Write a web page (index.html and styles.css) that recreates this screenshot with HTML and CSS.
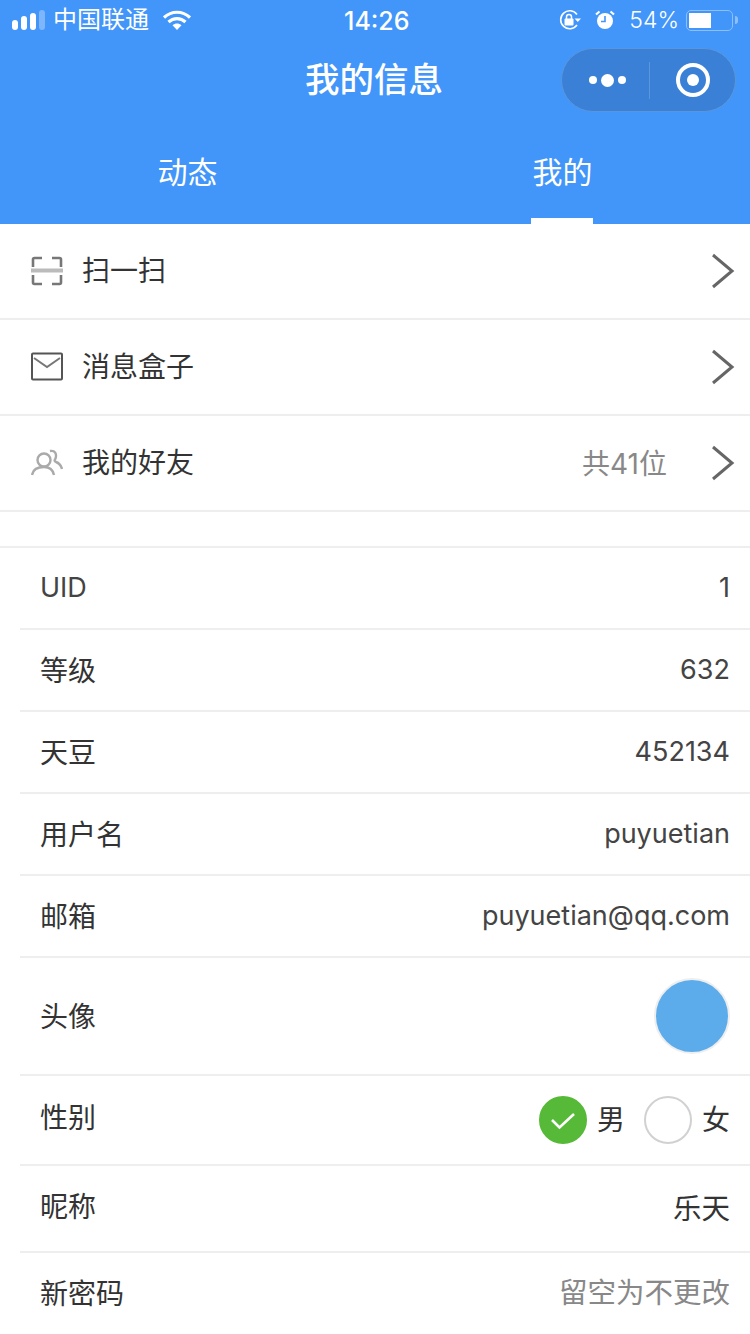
FILE: index.html
```html
<!DOCTYPE html>
<html lang="zh-CN">
<head>
  <meta charset="UTF-8">
  <meta name="viewport" content="width=device-width, initial-scale=1.0">
  <title>我的信息</title>
  <link rel="stylesheet" href="styles.css">
</head>
<body>
  <header class="header">
    <div class="status">
      <div class="status-left">
        <span class="signal"><i></i><i></i><i></i><i class="off"></i></span>
        <span class="carrier">中国联通</span>
        <svg class="wifi" width="28" height="20" viewBox="0 0 28 20">
          <path d="M1 7.5C8.5 .5 19.5 .5 27 7.5" fill="none" stroke="#fff" stroke-width="3.2"/>
          <path d="M5.5 12C10.5 7.5 17.5 7.5 22.5 12" fill="none" stroke="#fff" stroke-width="3.2"/>
          <path d="M9.5 15.2C12.3 13 15.700 13 18.500 15.200L14 20Z" fill="#fff"/>
        </svg>
      </div>
      <div class="time">14:26</div>
      <div class="status-right">
        <svg width="24" height="22" viewBox="0 0 24 22">
          <path d="M19 5.5A9 9 0 1 0 19 16" fill="none" stroke="#fff" stroke-width="1.6"/>
          <path d="M16.5 9.5h6.5l-3.2 3.6z" fill="#fff"/>
          <rect x="6.5" y="9.5" width="9" height="7" rx="1" fill="#fff"/>
          <path d="M8.5 10V8a2.5 2.5 0 0 1 5 0v2" fill="none" stroke="#fff" stroke-width="1.5"/>
        </svg>
        <svg class="alarm" width="20" height="20" viewBox="0 0 20 20">
          <circle cx="10" cy="11" r="8" fill="#fff"/>
          <path d="M10 6v5.5H6" fill="none" stroke="#4295f9" stroke-width="1.6"/>
          <path d="M1 4.5 4.5 1.5M19 4.500 15.500 1.500" stroke="#fff" stroke-width="2.200"/>
        </svg>
        <span class="percent">54%</span>
        <span class="battery"><span class="battery-level"></span></span>
        <span class="battery-tip"></span>
      </div>
    </div>
    <div class="nav">
      <h1 class="title">我的信息</h1>
      <div class="capsule">
        <span class="capsule-dots"><i></i><i class="big"></i><i></i></span>
        <span class="capsule-line"></span>
        <span class="capsule-target"><i></i></span>
      </div>
    </div>
    <div class="tabs">
      <div class="tab">动态</div>
      <div class="tab active">我的</div>
    </div>
  </header>

  <section class="menu">
    <div class="menu-row">
      <svg class="menu-icon" width="32" height="30" viewBox="0 0 32 30">
        <path d="M2 11V3.500Q2 2 3.500 2H11M21 2h7.500Q30 2 30 3.500V11M2 19v7.500Q2 28 3.500 28H11M21 28h7.500Q30 28 30 26.500V19" fill="none" stroke="#777" stroke-width="2.600"/>
        <path d="M0 14.500H32" stroke="#bbb" stroke-width="4"/>
      </svg>
      <span class="menu-label">扫一扫</span>
      <svg class="chevron" width="24" height="36" viewBox="0 0 24 36"><path d="M2 2 21 18 2 34" fill="none" stroke="#666" stroke-width="3"/></svg>
    </div>
    <div class="menu-row">
      <svg class="menu-icon" width="32" height="30" viewBox="0 0 32 30">
        <rect x="1" y="1.500" width="30" height="26" rx="1" fill="none" stroke="#555" stroke-width="2"/>
        <path d="M3 6 16 15 29 6" fill="none" stroke="#777" stroke-width="2"/>
      </svg>
      <span class="menu-label">消息盒子</span>
      <svg class="chevron" width="24" height="36" viewBox="0 0 24 36"><path d="M2 2 21 18 2 34" fill="none" stroke="#666" stroke-width="3"/></svg>
    </div>
    <div class="menu-row">
      <svg class="menu-icon" width="32" height="30" viewBox="0 0 32 30">
        <circle cx="13" cy="12" r="6.500" fill="none" stroke="#aaa" stroke-width="2.400"/>
        <path d="M1 27C2 21 7 19 13 19S22 22 23 27" fill="none" stroke="#aaa" stroke-width="2.400"/>
        <path d="M19 3C24 2 26 6 24.500 10.500 23.500 12 23 13 25 14 28 15 30 17 31 21" fill="none" stroke="#aaa" stroke-width="2.400"/>
      </svg>
      <span class="menu-label">我的好友</span>
      <span class="menu-extra">共41位</span>
      <svg class="chevron" width="24" height="36" viewBox="0 0 24 36"><path d="M2 2 21 18 2 34" fill="none" stroke="#666" stroke-width="3"/></svg>
    </div>
  </section>

  <section class="form">
    <div class="form-row"><span class="latin">UID</span><span class="latin">1</span></div>
    <div class="form-row"><span>等级</span><span class="latin">632</span></div>
    <div class="form-row"><span>天豆</span><span class="latin">452134</span></div>
    <div class="form-row"><span>用户名</span><span class="latin">puyuetian</span></div>
    <div class="form-row"><span>邮箱</span><span class="latin">puyuetian@qq.com</span></div>
    <div class="form-row avatar-row"><span>头像</span><span class="avatar"></span></div>
    <div class="form-row gender-row">
      <span class="raised">性别</span>
      <span class="radios">
        <span class="radio checked">
          <svg width="26" height="20" viewBox="0 0 26 20"><path d="M2 10 9.500 17.500 24 4" fill="none" stroke="#fff" stroke-width="2.600"/></svg>
        </span>
        <span class="radio-label">男</span>
        <span class="radio"></span>
        <span class="radio-label">女</span>
      </span>
    </div>
    <div class="form-row nick-row"><span class="raised">昵称</span><span class="wide">乐天</span></div>
    <div class="form-row last"><span>新密码</span><span class="placeholder wide">留空为不更改</span></div>
  </section>
</body>
</html>
```

FILE: styles.css
```css
html, body {
  margin: 0;
  padding: 0;
}
body {
  width: 750px;
  height: 1334px;
  overflow: hidden;
  background: #fff;
  color: #333;
  font-family: Inter, "Noto Sans CJK SC", sans-serif;
  font-size: 28px;
}
.header {
  height: 224px;
  background: #4295f9;
  color: #fff;
}
.status {
  height: 40px;
  display: flex;
  align-items: center;
  justify-content: space-between;
  padding: 0 12px;
  position: relative;
}
.status-left, .status-right {
  display: flex;
  align-items: center;
}
.signal {
  display: flex;
  align-items: flex-end;
  gap: 3px;
  height: 20px;
}
.signal i {
  width: 6px;
  border-radius: 3px;
  background: #fff;
}
.signal i:nth-child(1) { height: 10px; }
.signal i:nth-child(2) { height: 14px; }
.signal i:nth-child(3) { height: 17px; }
.signal i:nth-child(4) { height: 20px; }
.signal i.off {
  background: #7db6fb;
}
.carrier {
  margin-left: 8px;
  font-size: 24px;
  line-height: 40px;
}
.wifi {
  margin-left: 14px;
}
.time {
  position: absolute;
  left: 344px;
  top: 0;
  font-size: 25px;
  line-height: 42px;
  font-weight: 500;
}
.alarm {
  margin-left: 13px;
}
.percent {
  margin-left: 14px;
  font-size: 23px;
  line-height: 42px;
  font-weight: 300;
}
.battery {
  margin-left: 7px;
  border: 1.5px solid #8dc0fb;
  border-radius: 5px;
  padding: 2px;
  height: 15px;
  width: 41px;
}
.battery-level {
  display: block;
  width: 22px;
  height: 15px;
  background: #fff;
}
.battery-tip {
  margin-left: 2px;
  width: 3px;
  height: 8px;
  background: #8dc0fb;
  border-radius: 0 3px 3px 0;
}
.nav {
  height: 80px;
  position: relative;
  display: flex;
  align-items: center;
  justify-content: center;
}
.title {
  margin: 0 2px 0 0;
  font-size: 34.5px;
  font-weight: 500;
  line-height: 78px;
}
.capsule {
  position: absolute;
  right: 14px;
  top: 8px;
  width: 173px;
  height: 62px;
  border: 1px solid #5a96dc;
  border-radius: 32px;
  background: #3a80d6;
  display: flex;
  align-items: center;
}
.capsule-dots {
  width: 87px;
  padding-left: 3px;
  box-sizing: border-box;
  display: flex;
  align-items: center;
  justify-content: center;
  gap: 4px;
}
.capsule-dots i {
  width: 8px;
  height: 8px;
  border-radius: 50%;
  background: #fff;
}
.capsule-dots i.big {
  width: 13px;
  height: 13px;
}
.capsule-line {
  width: 1px;
  height: 37px;
  background: #5a96dc;
}
.capsule-target {
  flex: 1;
  display: flex;
  justify-content: center;
}
.capsule-target i {
  width: 34px;
  height: 34px;
  box-sizing: border-box;
  border: 4px solid #fff;
  border-radius: 50%;
  display: flex;
  align-items: center;
  justify-content: center;
}
.capsule-target i::after {
  content: "";
  width: 12px;
  height: 12px;
  border-radius: 50%;
  background: #fff;
}
.tabs {
  height: 104px;
  display: flex;
}
.tab {
  flex: 1;
  text-align: center;
  font-size: 30px;
  line-height: 104px;
  position: relative;
}
.tab.active::after {
  content: "";
  position: absolute;
  left: 156px;
  bottom: 0;
  width: 62px;
  height: 6px;
  background: #fff;
}
.menu {
  border-bottom: 2px solid #eee;
  margin-bottom: 34px;
}
.menu-row {
  height: 94px;
  display: flex;
  align-items: center;
  padding: 0 15px 0 31px;
  border-bottom: 2px solid #eee;
}
.menu-row:last-child {
  border-bottom: 0;
}
.menu-label {
  margin-left: 19px;
  flex: 1;
  margin-bottom: 5px;
}
.menu-extra {
  color: #888;
  margin: 0 44px 3px 0;
}
.form {
  border-top: 2px solid #eee;
}
.form-row {
  height: 80px;
  margin-left: 20px;
  padding: 0 20px;
  display: flex;
  align-items: center;
  justify-content: space-between;
  border-bottom: 2px solid #eee;
}
.form-row span {
  margin-bottom: 3px;
}
.form-row .latin {
  font-size: 27px;
  color: #444;
  margin-bottom: 1px;
}
.form-row.avatar-row {
  height: 116px;
}
.form-row.gender-row {
  height: 88px;
}
.form-row.nick-row {
  height: 85px;
}
.form-row.last {
  border-bottom: 0;
}
.form-row .raised {
  margin-bottom: 8px;
}
.form-row .wide {
  font-size: 28.5px;
  margin-bottom: 5px;
}
.form-row .avatar {
  width: 72px;
  height: 72px;
  margin: 0;
  border-radius: 50%;
  background: #5caceb;
  border: 2px solid #eee;
}
.form-row .radios {
  display: flex;
  align-items: center;
  margin: 0;
}
.form-row .radio {
  width: 44px;
  height: 44px;
  margin: 0;
  border: 2px solid #d1d1d1;
  border-radius: 50%;
  display: flex;
  align-items: center;
  justify-content: center;
}
.form-row .radio.checked {
  background: #56b937;
  border-color: #56b937;
}
.form-row .radio-label {
  margin: 0 0 5px 10px;
}
.form-row .radio-label + .radio {
  margin-left: 19px;
}
.placeholder {
  color: #888;
}
```
